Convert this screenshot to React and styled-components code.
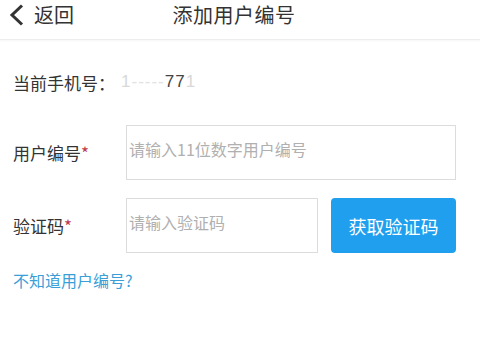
import React from 'react';
import styled, { createGlobalStyle } from 'styled-components';

const GlobalStyle = createGlobalStyle`
  html, body {
    margin: 0;
    padding: 0;
    background: #fff;
    font-family: "Noto Sans CJK SC", "Noto Sans", sans-serif;
  }
`;

const Page = styled.div`
  width: 480px;
  height: 356px;
  overflow: hidden;
  background: #fff;
`;

const Header = styled.div`
  position: relative;
  box-sizing: border-box;
  height: 40px;
  display: flex;
  align-items: flex-start;
  border-bottom: 1px solid #ececec;
  box-shadow: 0 1px 2px rgba(0, 0, 0, 0.04);
`;

const Back = styled.div`
  display: flex;
  align-items: center;
  gap: 10px;
  padding-left: 8px;
  color: #333;
  font-size: 20px;
  line-height: normal;
`;

const Title = styled.div`
  position: absolute;
  left: 0;
  right: 12px;
  top: 0;
  text-align: center;
  line-height: normal;
  font-size: 20px;
  color: #333;
  letter-spacing: 0.5px;
`;

const Form = styled.div`
  padding: 0 24px 0 13px;
  display: flex;
  flex-direction: column;
`;

const InfoRow = styled.div`
  margin-top: 31px;
  height: 22px;
  display: flex;
  align-items: center;
  font-size: 17px;
  color: #333;
`;

const Phone = styled.span`
  margin-left: 6px;
  color: #444;
  font-family: "Liberation Sans", sans-serif;
  font-size: 17px;
  letter-spacing: 1px;
`;

const Faint = styled.span`
  color: ${p => p.tone || '#d8d8d8'};
`;

const FieldRow = styled.div`
  margin-top: ${p => p.gap}px;
  display: flex;
  align-items: center;
  gap: 13px;
`;

const Label = styled.div`
  width: 113px;
  flex: none;
  font-size: 17px;
  color: #333;
  margin-right: -13px;
`;

const Star = styled.span`
  color: #c0394b;
`;

const Input = styled.input`
  box-sizing: border-box;
  height: 55px;
  flex: ${p => (p.wide ? 1 : 'none')};
  width: ${p => (p.wide ? 'auto' : '192px')};
  border: 1px solid #dcdcdc;
  padding: 0 0 8px 2px;
  font-family: inherit;
  font-size: 16px;
  color: #333;
  outline: none;
  &::placeholder {
    color: #b0b0b0;
  }
`;

const CodeButton = styled.button`
  flex: 1;
  height: 55px;
  border: none;
  border-radius: 4px;
  background: #1f9fee;
  color: #fff;
  font-family: inherit;
  font-size: 18px;
  padding: 0;
`;

const HelpLink = styled.a`
  margin-top: 16px;
  font-size: 16px;
  line-height: 22px;
  color: #3a9fd8;
  text-decoration: none;
`;

const Chevron = () => (
  <svg width="16" height="22" viewBox="0 0 16 22">
    <polyline points="14,1.5 4,11 14,20.5" fill="none" stroke="#333" strokeWidth="3" strokeLinejoin="miter" />
  </svg>
);

export default function App() {
  return (
    <Page>
      <GlobalStyle />
      <Header>
        <Back>
          <Chevron />
          <span>返回</span>
        </Back>
        <Title>添加用户编号</Title>
      </Header>
      <Form>
        <InfoRow>
          当前手机号：
          <Phone>
            <Faint>1</Faint>
            <Faint tone="#e2e2e2">-----</Faint>
            77
            <Faint>1</Faint>
          </Phone>
        </InfoRow>
        <FieldRow gap={32}>
          <Label>
            用户编号<Star>*</Star>
          </Label>
          <Input wide placeholder="请输入11位数字用户编号" />
        </FieldRow>
        <FieldRow gap={18}>
          <Label>
            验证码<Star>*</Star>
          </Label>
          <Input placeholder="请输入验证码" />
          <CodeButton>获取验证码</CodeButton>
        </FieldRow>
        <HelpLink href="#">不知道用户编号?</HelpLink>
      </Form>
    </Page>
  );
}
